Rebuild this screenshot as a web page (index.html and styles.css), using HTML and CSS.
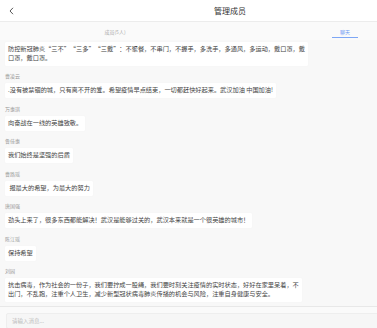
FILE: index.html
```html
<!DOCTYPE html>
<html lang="zh-CN">

<head>
  <meta charset="UTF-8">
  <meta name="viewport" content="width=device-width, initial-scale=1.0">
  <title>管理成员</title>
  <link rel="stylesheet" href="styles.css">
</head>

<body>
  <div class="page">
    <header class="topbar">
      <span class="back">
        <svg width="5" height="8" viewBox="0 0 5 8"><path d="M4 0.8 L1 4 L4 7.2" fill="none" stroke="#444" stroke-width="0.9"/></svg>
      </span>
      <h1>管理成员</h1>
    </header>

    <nav class="tabs">
      <div class="tab">成员(5人)</div>
      <div class="tab active">聊天</div>
    </nav>

    <div class="chat">
      <div class="msg">
        <div class="bubble">防控新冠肺炎“三不”“三多”“三戴”：不聚餐，不串门，不握手，多洗手，多通风，多运动，戴口罩，戴<br>口罩，戴口罩。</div>
      </div>
      <div class="msg">
        <div class="name">曹凌云</div>
        <div class="bubble">.没有被禁锢的城，只有离不开的爱。希望疫情早点结束，一切都赶快好起来。武汉加油 中国加油!</div>
      </div>
      <div class="msg">
        <div class="name">万惠琪</div>
        <div class="bubble">向奋战在一线的英雄致敬。</div>
      </div>
      <div class="msg">
        <div class="name">鲁佳惠</div>
        <div class="bubble">我们始终是坚强的后盾</div>
      </div>
      <div class="msg">
        <div class="name">曹路瑶</div>
        <div class="bubble">&nbsp;报最大的希望，为最大的努力</div>
      </div>
      <div class="msg">
        <div class="name">唐国强</div>
        <div class="bubble">劲头上来了，很多东西都能解决！武汉是能够过关的，武汉本来就是一个很英雄的城市！</div>
      </div>
      <div class="msg">
        <div class="name">陈江瑶</div>
        <div class="bubble">保持希望</div>
      </div>
      <div class="msg">
        <div class="name">刘园</div>
        <div class="bubble">抗击病毒，作为社会的一份子，我们要拧成一股绳，我们要时刻关注疫情的实时状态，好好在家里呆着，不<br>出门，不乱跑，注重个人卫生，减少新型冠状病毒肺炎传播的机会与风险，注重自身健康与安全。</div>
      </div>
    </div>

    <div class="composer">
      <input type="text" class="msgInput" placeholder="请输入消息...">
    </div>
  </div>
</body>

</html>
```

FILE: styles.css
```css
html,
body {
  margin: 0;
  padding: 0;
  overflow: hidden;
  background-color: #f8f8f8;
}

body {
  font-family: "Noto Sans CJK SC", "Noto Sans", sans-serif;
  color: #333;
}

.page {
  width: 460px;
}

.topbar {
  position: relative;
  height: 21px;
  background-color: white;
  border-bottom: 1px solid #ececec;
  display: flex;
  align-items: center;
  justify-content: center;
}

.topbar h1 {
  margin: 0;
  font-size: 8px;
  font-weight: normal;
  line-height: 10px;
  color: #333;
}

.back {
  position: absolute;
  left: 9px;
  top: 7px;
  display: flex;
}

.tabs {
  display: flex;
  height: 18px;
  background-color: #fafafa;
}

.tab {
  flex: 1;
  display: flex;
  align-items: center;
  justify-content: center;
  font-size: 5px;
  color: #aaa;
  position: relative;
}

.tab.active {
  color: #6f9cf3;
}

.tab.active::after {
  content: "";
  position: absolute;
  bottom: 2px;
  left: 50%;
  width: 26px;
  margin-left: -13px;
  height: 1px;
  background-color: #7ea7f5;
}

.chat {
  padding: 2px 5px 4px 5px;
  display: flex;
  flex-direction: column;
  gap: 7.5px;
}

.msg {
  display: flex;
  flex-direction: column;
  align-items: flex-start;
  gap: 4px;
}

.name {
  font-size: 5px;
  line-height: 6px;
  height: 6px;
  color: #999;
}

.bubble {
  background-color: white;
  font-size: 6.2px;
  line-height: 8.5px;
  padding: 3.25px 3px;
  color: #444;
  border-radius: 1px;
  box-shadow: 0 0 1px rgba(0, 0, 0, 0.06);
  white-space: nowrap;
}

.composer {
  border-top: 1px solid #e8e8e8;
  padding: 6px 0 0 6px;
  background-color: #fafafa;
}

.msgInput {
  display: block;
  width: 440px;
  height: 16px;
  box-sizing: border-box;
  border: 1px solid #eeeeee;
  border-radius: 2px;
  background-color: #f6f6f6;
  padding: 0 5px;
  font-family: "Noto Sans CJK SC", sans-serif;
  font-size: 5.5px;
  outline: none;
}

.msgInput::placeholder {
  color: #bbb;
}
```
